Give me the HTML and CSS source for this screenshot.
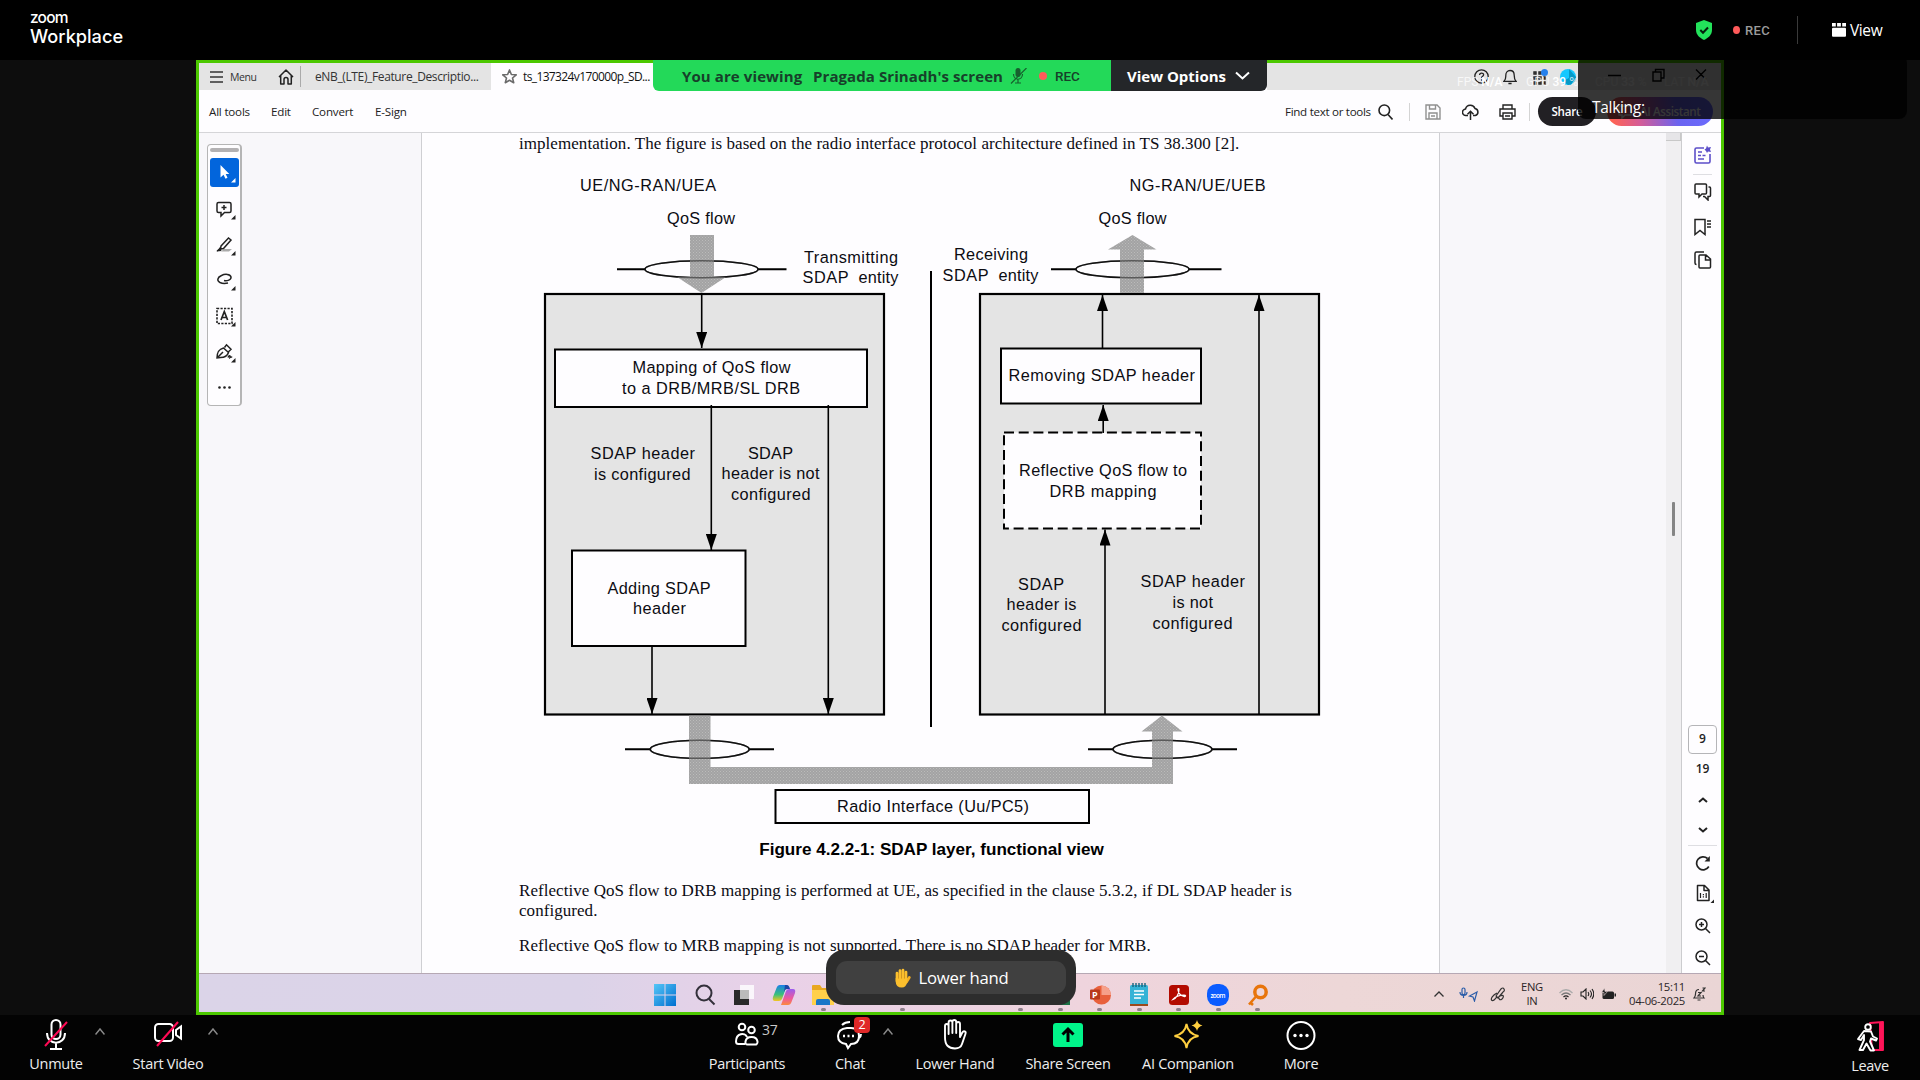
FILE: index.html
```html
<!DOCTYPE html>
<html lang="en">
<head>
<meta charset="utf-8">
<title>Zoom Workplace</title>
<link rel="stylesheet" href="styles.css">
</head>
<body>
<header class="topbar">
  <div class="brand"><span class="brand-zoom">zoom</span><span class="brand-work">Workplace</span></div>
  <div class="top-right">
    <svg class="shield" width="18" height="22" viewBox="0 0 18 22"><path d="M9 1l8 3v7c0 5-4 8-8 10-4-2-8-5-8-10V4z" fill="#23e35b"/><path d="M5.3 11l2.7 2.8 5-5.3" fill="none" stroke="#04200c" stroke-width="2"/></svg>
    <span class="dot"></span><span class="rec">REC</span>
    <span class="top-sep"></span>
    <svg class="view-ico" width="14" height="14" viewBox="0 0 14 14" fill="#fff"><path d="M0 0h3.800v3.600H0zM5.100 0h3.800v3.600H5.100zM10.200 0H14v3.600h-3.800z"/><rect y="4.800" width="14" height="9" rx="1"/></svg>
    <span class="view">View</span>
  </div>
</header>

<main class="stage">
  <section class="share">
    <div class="tabs">
      <div class="tabs-left">
        <svg width="13" height="12" viewBox="0 0 13 12" stroke="#333" stroke-width="1.500"><path d="M0 1h13M0 6h13M0 11h13"/></svg>
        <span class="menu">Menu</span>
        <svg class="home" width="16" height="16" viewBox="0 0 16 16" fill="none" stroke="#222" stroke-width="1.500" stroke-linejoin="round"><path d="M1 8l7-7 7 7M2.700 6.500V15H6v-4.500a2 2 0 014 0V15h3.300V6.500"/></svg>
        <span class="tab-sep"></span>
        <span class="tab-one">eNB_(LTE)_Feature_Descriptio...</span>
      </div>
      <div class="tab-active">
        <svg width="15" height="15" viewBox="0 0 16 16" fill="none" stroke="#6b6b6b" stroke-width="1.700" stroke-linejoin="round"><path d="M8 1l2 4.800 5.200.4-4 3.400 1.300 5L8 12l-4.500 2.600 1.300-5-4-3.400L6 5.800z"/></svg>
        <span>ts_137324v170000p_SD...</span>
      </div>
      <div class="tabs-right">
        <svg width="15" height="15" viewBox="0 0 15 15" fill="none" stroke="#222" stroke-width="1.300"><circle cx="7.500" cy="7.500" r="6.700"/><path d="M5.600 6c0-2.600 4-2.500 4-.2 0 1.500-2 1.500-2 3.200M7.600 10.300v1.500"/></svg>
        <svg class="bell" width="14" height="16" viewBox="0 0 14 16" fill="none" stroke="#222" stroke-width="1.300"><path d="M1 12.300c2-2 1.800-4 1.800-6C2.800 3.500 4.500 1.500 7 1.500s4.200 2 4.200 4.800c0 2 0 4 1.800 6zM5.400 14.500h3.200"/></svg>
        <svg class="apps" width="17" height="16" viewBox="0 0 17 16"><g fill="none" stroke="#222" stroke-width="1.400"><path d="M2 3h2v2H2zM7 3h2v2H7zM2 8h2v2H2zM7 8h2v2H7zM2 13h2v2H2zM7 13h2v2H7zM12 8h1v2h-1zM12 13h1v2h-1z"/></g><circle cx="12.500" cy="3.500" r="3.500" fill="#2680eb"/></svg>
        <svg class="avatar" width="16" height="16" viewBox="0 0 16 16"><circle cx="8" cy="8" r="8" fill="#14c8ff"/><path d="M9 0l7 8a8 8 0 01-8 8l-5-4 6-3z" fill="#0599c6"/></svg>
        <svg class="winctl" width="100" height="14" viewBox="0 0 100 14" fill="none" stroke="#000" stroke-width="1.400"><path d="M1 7.500h13M46 4h8v9h-8zM48.500 4V1.500h8.500V10h-3M89 1.500l10 10M99 1.500l-10 10"/></svg>
        <div class="meter"><span class="m1">FPS <b>N/A</b></span><span class="m2">GPU <b>39</b> %</span><span class="m3">CPU <b>33</b> %</span><span class="m4">LAT <b>N/A</b></span></div>
      </div>
    </div>

    <div class="tools">
      <span class="t-all">All tools</span><span class="t-edit">Edit</span><span class="t-conv">Convert</span><span class="t-sign">E-Sign</span>
      <div class="tools-right">
        <span class="find">Find text or tools</span>
        <svg class="i-search" width="15" height="16" viewBox="0 0 15 16" fill="none" stroke="#222" stroke-width="1.600"><circle cx="6.300" cy="6.300" r="5.300"/><path d="M10 10.500l4.500 5"/></svg>
        <span class="tsep"></span>
        <svg class="i-save" width="16" height="16" viewBox="0 0 16 16" fill="none" stroke="#909090" stroke-width="1.400"><path d="M1 1h11l3 3v11H1zM4.500 1v4h6V1M4 15V9h8v6M6 12h4"/></svg>
        <svg class="i-cloud" width="17" height="16" viewBox="0 0 17 16" fill="none" stroke="#222" stroke-width="1.500"><path d="M6 11.500H4A3.200 3.200 0 013.500 5 5 5 0 0113 4.500a3.600 3.600 0 01.3 7H11M8.500 16V7.500M5.500 10.300l3-3 3 3"/></svg>
        <svg class="i-print" width="17" height="16" viewBox="0 0 17 16" fill="none" stroke="#222" stroke-width="1.400"><path d="M4 5V1h9v4M4 12H1V5h15v7h-3M4 9h9v6H4zM6 12h5"/></svg>
        <span class="tsep tsep2"></span>
        <span class="sharebtn">Share</span>
        <span class="aibtn"><svg width="16" height="14" viewBox="0 0 16 14" fill="none" stroke="#fff" stroke-width="1.500"><path d="M2 1h12v9H8l-3 3v-3H2z"/></svg>AI Assistant</span>
      </div>
    </div>

    <div class="doc">
      <div class="gutter">
        <div class="palette">
          <span class="grip"></span>
          <span class="tool sel"><svg width="29" height="29" viewBox="0 0 29 29" fill="#fff"><path d="M10.500 7v12.500l3-2.700 2 4 2-1-1.800-3.800h3.600zM25.500 20v4.500H21z"/></svg></span>
          <span class="tool"><svg width="29" height="29" viewBox="0 0 29 29"><g fill="none" stroke="#222" stroke-width="1.500"><path d="M8.500 7.500h11q1.500 0 1.500 1.500v7q0 1.500-1.500 1.500h-5L11 21v-3.500H8.500Q7 17.500 7 16V9q0-1.500 1.500-1.500zM14 10v5M11.500 12.500h5"/></g><path d="M25.500 20v4.500H21z" fill="#222"/></svg></span>
          <span class="tool"><svg width="29" height="29" viewBox="0 0 29 29"><path d="M14 18h8l-3 2.500h-8z" fill="#aaa"/><path d="M11 15l7.500-8 2.500 2-7.500 8.500-3 .5zM10 18l-3 2" fill="none" stroke="#222" stroke-width="1.500"/><path d="M10 16l-3.500 4.500 5-.5zM25.500 20v4.500H21z" fill="#222"/></svg></span>
          <span class="tool"><svg width="29" height="29" viewBox="0 0 29 29"><path d="M14 14.500c3 .8 7.500-.7 7-3.500-.6-3-6-3.300-9.500-1.500-4.500 2-4.700 5.300-1.500 7 2 1 5 1.200 8 .5" fill="none" stroke="#222" stroke-width="1.500"/><path d="M25.500 20v4.500H21z" fill="#222"/></svg></span>
          <span class="tool"><svg width="29" height="29" viewBox="0 0 29 29"><path d="M7 6.500h15v15H7z" fill="none" stroke="#222" stroke-width="1.600" stroke-dasharray="2.200 1.300"/><path d="M11 18l3.300-8.500L17.600 18M12 15.500h4.600" fill="none" stroke="#222" stroke-width="1.700"/><path d="M25.500 20v4.500H21z" fill="#222"/></svg></span>
          <span class="tool"><svg width="29" height="29" viewBox="0 0 29 29"><path d="M7 20c0-5 1-8.500 6.500-10l5 4.500c-1 3-3.500 5-8 5zM14.500 9.500l2-2.700 4.500 4.500-2.500 2.500M8 19l5-5M18 19.500c1-2.500 2.500-2.500 2 0 1-.8 1.500-.8 2 0" fill="none" stroke="#222" stroke-width="1.500"/><path d="M25.500 20v4.500H21z" fill="#222"/></svg></span>
          <span class="tool"><svg width="29" height="29" viewBox="0 0 29 29" fill="#222"><circle cx="9.500" cy="13.500" r="1.300"/><circle cx="14.500" cy="13.500" r="1.300"/><circle cx="19.500" cy="13.500" r="1.300"/></svg></span>
        </div>
      </div>
      <article class="page">
        <p class="para p-top">implementation. The figure is based on the radio interface protocol architecture defined in TS 38.300 [2].</p>
        <svg class="figure" width="1017" height="676" viewBox="422 158 1017 676">
          <defs>
            <pattern id="mesh" width="3" height="3" patternUnits="userSpaceOnUse"><rect width="3" height="3" fill="#9c9c9c"/><path d="M0 0h1v1H0zM1.500 1.500h1v1h-1z" fill="#b6b6b6"/></pattern>
            <marker id="head" markerUnits="userSpaceOnUse" markerWidth="16" markerHeight="11" refX="16" refY="5.500" orient="auto"><path d="M0 0l16 5.500L0 11z"/></marker>
          </defs>
          <g class="block"><rect x="545" y="294" width="339" height="420.500"/><rect x="980" y="294" width="339" height="420.500"/></g>
          <g class="box"><rect x="555" y="349.500" width="312" height="57.500"/><rect x="572" y="550.500" width="173.500" height="95.500"/><rect x="1001" y="348.500" width="200" height="55"/><rect x="775.500" y="790" width="313.500" height="33"/></g>
          <rect class="dashed" x="1004" y="432.500" width="197" height="96"/>
          <path class="line" d="M931 271V727M617 269.300h28M758 269.300h28.500M1051 269.300h25M1189 269.300h32.500M625 749.300h25M749 749.300h25M1088 749.300h25M1212 749.300h25"/>
          <g class="oval"><ellipse cx="701.500" cy="269.300" rx="56.500" ry="8.500"/><ellipse cx="1132.500" cy="269.300" rx="56.500" ry="8.500"/><ellipse cx="699.700" cy="749.300" rx="49.500" ry="9"/><ellipse cx="1162.500" cy="749.300" rx="49.500" ry="9"/></g>
          <g fill="url(#mesh)" opacity=".93">
            <path d="M690 235h24v42h12l-24.500 16L677 277h13zM1132.500 235l24 14.500H1144V293h-24v-43.500h-12zM689 715.500h21.500V767h441.500v-35.500h-10.500l20.500-16 20.500 16H1173V784H689z"/>
          </g>
          <g class="oval-over"><ellipse cx="701.500" cy="269.300" rx="56.500" ry="8.500"/><ellipse cx="1132.500" cy="269.300" rx="56.500" ry="8.500"/><ellipse cx="699.700" cy="749.300" rx="49.500" ry="9"/><ellipse cx="1162.500" cy="749.300" rx="49.500" ry="9"/></g>
          <g class="arrow"><path d="M701.700 294v54"/><path d="M711.300 405v145"/><path d="M828.300 405v309"/><path d="M652 646v68"/><path d="M1102.500 348v-53"/><path d="M1103.200 433v-28"/><path d="M1105 714V529.500"/><path d="M1259 714V295"/></g>
          <g class="lbl">
            <text x="580" y="191" textLength="136">UE/NG-RAN/UEA</text><text x="667" y="223.700" textLength="68">QoS flow</text>
            <text x="804" y="262.700" textLength="94">Transmitting</text><text x="802.500" y="282.700" textLength="46">SDAP</text><text x="858.500" y="282.700" textLength="40">entity</text>
            <text x="954" y="260.200" textLength="74">Receiving</text><text x="942.500" y="280.500" textLength="46">SDAP</text><text x="998.500" y="280.500" textLength="40">entity</text>
            <text x="1129.500" y="191" textLength="136">NG-RAN/UE/UEB</text><text x="1098.500" y="223.700" textLength="68">QoS flow</text>
            <text x="632.500" y="373.300" textLength="158">Mapping of QoS flow</text><text x="622" y="394.300" textLength="178">to a DRB/MRB/SL DRB</text>
            <text x="1008.500" y="381.300" textLength="186.500">Removing SDAP header</text>
            <text x="590.500" y="459.300" textLength="104.500">SDAP header</text><text x="594" y="480" textLength="96.500">is configured</text>
            <text x="748" y="459" textLength="45">SDAP</text><text x="721.500" y="479.300" textLength="98">header is not</text><text x="731" y="499.500" textLength="79.500">configured</text>
            <text x="607.500" y="593.800" textLength="103">Adding SDAP</text><text x="633" y="614.300" textLength="53">header</text>
            <text x="1019" y="476" textLength="168">Reflective QoS flow to</text><text x="1049.500" y="496.500" textLength="107">DRB mapping</text>
            <text x="1018" y="589.700" textLength="46">SDAP</text><text x="1006.500" y="610" textLength="70">header is</text><text x="1001.500" y="630.700" textLength="80">configured</text>
            <text x="1140.500" y="587.300" textLength="104.500">SDAP header</text><text x="1172.500" y="608" textLength="40.500">is not</text><text x="1152.500" y="628.500" textLength="80">configured</text>
            <text x="837" y="812.200" textLength="192">Radio Interface (Uu/PC5)</text>
          </g>
        </svg>
        <p class="caption">Figure 4.2.2-1: SDAP layer, functional view</p>
        <p class="para p-drb">Reflective QoS flow to DRB mapping is performed at UE, as specified in the clause 5.3.2, if DL SDAP header is<br>configured.</p>
        <p class="para p-mrb">Reflective QoS flow to MRB mapping is not supported. There is no SDAP header for MRB.</p>
      </article>
      <div class="margin-right"></div>
      <div class="scroll"><span class="scroll-btn"></span><span class="thumb"></span></div>
      <aside class="side">
        <svg class="s-ai" width="18" height="20" viewBox="0 0 18 20" fill="none" stroke="#5c4ec9" stroke-width="1.600"><path d="M10 3H2.500Q1 3 1 4.500v12Q1 18 2.500 18h12q1.500 0 1.500-1.500V9M4 7h4M4 10.500h3M4 14h6M8.500 10.500h3"/><path d="M13 .5l1 2 3-.5-1 2.500 1 2.500-3-.5-1 1.500-1-2-1.500-1.500L12 3.500z" fill="#5c4ec9" stroke="none"/></svg>
        <span class="s-line"></span>
        <svg class="s-com" width="18" height="18" viewBox="0 0 18 18" fill="none" stroke="#222" stroke-width="1.500"><path d="M2 1h9.500q1 0 1 1v8q0 1-1 1H8l-3 3v-3H2q-1 0-1-1V2q0-1 1-1zM14.500 4h1q1 0 1 1v7.500q0 1-1 1H14v3.500l-3.500-3.500H9"/></svg>
        <svg class="s-book" width="18" height="18" viewBox="0 0 18 18" fill="none" stroke="#222" stroke-width="1.500"><path d="M1 1.500h10v15L6 12.500 1 16.500zM13 3h4M13 6h4M13 9h4"/></svg>
        <svg class="s-page" width="18" height="18" viewBox="0 0 18 18" fill="none" stroke="#222" stroke-width="1.500"><path d="M2.500 13.500Q1 13.500 1 12V2.500Q1 1 2.500 1H10M6 4h6l4.500 4v8q0 1-1 1H6q-1 0-1-1V5q0-1 1-1zM11.500 4v5h5"/></svg>
        <span class="s-cur">9</span>
        <span class="s-tot">19</span>
        <svg class="s-up" width="10" height="6" viewBox="0 0 10 6" fill="none" stroke="#222" stroke-width="2"><path d="M1 5l4-3.500L9 5"/></svg>
        <svg class="s-down" width="10" height="6" viewBox="0 0 10 6" fill="none" stroke="#222" stroke-width="2"><path d="M1 1l4 3.500L9 1"/></svg>
        <span class="s-line s-line2"></span>
        <svg class="s-rot" width="16" height="16" viewBox="0 0 16 16" fill="none" stroke="#222" stroke-width="1.700"><path d="M13.800 11.500A6.500 6.500 0 1112.500 3.500"/><path d="M14.800 1v5.500H9.500z" fill="#222" stroke="none"/></svg>
        <svg class="s-fit" width="20" height="20" viewBox="0 0 20 20"><path d="M3.500 1.500h7L15 6v10.500H3.500zM10 1.500V6.500h5" fill="none" stroke="#222" stroke-width="1.500" stroke-linejoin="round"/><path d="M6.500 9v5M12.200 9v5M9.400 10v1.300M9.400 12.300v1.300" stroke="#222" stroke-width="1.200"/><path d="M20 15.500V19h-3.500z" fill="#222"/></svg>
        <svg class="s-zin" width="16" height="16" viewBox="0 0 16 16" fill="none" stroke="#222" stroke-width="1.500"><circle cx="6.500" cy="6.500" r="5.500"/><path d="M10.500 10.500L15 15M4 6.500h5M6.500 4v5"/></svg>
        <svg class="s-zout" width="16" height="16" viewBox="0 0 16 16" fill="none" stroke="#222" stroke-width="1.500"><circle cx="6.500" cy="6.500" r="5.500"/><path d="M10.500 10.500L15 15M4 6.500h5"/></svg>
      </aside>
    </div>

    <div class="taskbar">
      <div class="apps-row">
        <span class="app"><svg width="22" height="22" viewBox="0 0 22 22"><defs><linearGradient id="w" x2="1" y2="1"><stop stop-color="#55c6f7"/><stop offset="1" stop-color="#006fd0"/></linearGradient></defs><path d="M0 0h10.500v10.500H0zM11.500 0H22v10.500H11.500zM0 11.500h10.500V22H0zM11.500 11.500H22V22H11.500z" fill="url(#w)"/></svg></span>
        <span class="app"><svg width="22" height="22" viewBox="0 0 22 22" fill="none" stroke="#33303a" stroke-width="2"><circle cx="10" cy="9" r="7.500"/><path d="M15 15l5.500 5.500"/></svg></span>
        <span class="app"><svg width="22" height="22" viewBox="0 0 22 22"><path d="M1 6h15v15H1z" fill="#2a2a2a"/><path d="M7 1h14v14H7z" fill="#fff" opacity=".8"/><path d="M7 6h9v9H7z" fill="#bbb"/></svg></span>
        <span class="app"><svg width="24" height="22" viewBox="0 0 24 22"><defs><linearGradient id="c1" x2="0" y2="1"><stop stop-color="#1a7fe8"/><stop offset=".6" stop-color="#3bc07a"/><stop offset="1" stop-color="#f5c520"/></linearGradient><linearGradient id="c2" x2="0" y2="1"><stop stop-color="#9a5cf0"/><stop offset=".6" stop-color="#ef5a9a"/><stop offset="1" stop-color="#fb8a3c"/></linearGradient></defs><path d="M8 1h7l-5 14q-1 2-3 2H3q-3 0-2-4L4.500 4Q5.500 1 8 1z" fill="url(#c1)"/><path d="M17 5h4q3 0 2 4l-3.500 9q-1 3-3.500 3H9l5-14q1-2 3-2z" fill="url(#c2)"/><path d="M13 1h2q2 0 3 4h-3q-2 0-3 3z" fill="#1b48a8"/></svg></span>
        <span class="app run"><svg width="24" height="22" viewBox="0 0 24 22"><path d="M1 2q0-1 1-1h7l2 3h12v17H1z" fill="#e9a820"/><path d="M1 6h22v15H1z" fill="#ffd04a"/><path d="M5 21v-4q0-2 2-2h10q2 0 2 2v4z" fill="#1976c8"/></svg></span>
        <span class="app"></span><span class="app run"></span><span class="app"></span><span class="app"></span><span class="app run"></span>
        <span class="app run"><svg width="22" height="22" viewBox="0 0 22 22"><path d="M2 2h19v19H2z" fill="#1d7045"/></svg></span>
        <span class="app run"><svg width="22" height="22" viewBox="0 0 22 22"><circle cx="12.500" cy="11" r="9.500" fill="#e8603c"/><path d="M12.500 1.500A9.500 9.500 0 0122 11h-9.500z" fill="#f6a08a"/><rect x="1" y="5.500" width="10" height="10" rx="1" fill="#b93a1c"/><text x="3" y="14" class="pp">P</text></svg></span>
        <span class="app run"><svg width="20" height="24" viewBox="0 0 20 24"><rect x="1" y="2" width="18" height="20" rx="1.500" fill="#35b3d6"/><path d="M1 21h18v2H1z" fill="#9c4a1c"/><path d="M4 0v4M7 0v4M10 0v4M13 0v4M16 0v4" stroke="#17627c" stroke-width="1.400"/><path d="M5 8h10M5 11.500h10M5 15h7" stroke="#fff" stroke-width="1.300"/></svg></span>
        <span class="app run"><svg width="20" height="20" viewBox="0 0 20 20"><rect width="20" height="20" rx="3.500" fill="#b30b00"/><path d="M4 14.500c3-1 6-5 6-10 0-1.500-1.500-1-1 .5.500 3 3 6 6.500 6.500 1.500 0 1.500-1.300-.5-1.300-4 0-8.500 1.300-11 4.300z" fill="none" stroke="#fff" stroke-width="1.300"/></svg></span>
        <span class="app run"><svg width="22" height="22" viewBox="0 0 22 22"><rect width="22" height="22" rx="9.500" fill="#0b5cff"/><text x="3.500" y="13.500" class="zm" textLength="15">zoom</text></svg></span>
        <span class="app run"><svg width="22" height="22" viewBox="0 0 22 22" fill="none" stroke="#e8750c"><circle cx="13.500" cy="8" r="5.700" stroke-width="3.500"/><path d="M9 12.500L2 20.500M3 18l3 3" stroke-width="2.500"/></svg></span>
      </div>
      <div class="tray">
        <svg class="y-up" width="10" height="6" viewBox="0 0 10 6" fill="none" stroke="#333" stroke-width="1.300"><path d="M.5 5.500L5 1l4.500 4.500"/></svg>
        <svg class="y-mic" width="19" height="15" viewBox="0 0 19 15" fill="none" stroke="#2a5ca8" stroke-width="1.200"><path d="M3 2.500a1.500 1.500 0 013 0V6a1.500 1.500 0 01-3 0zM1 5c0 4.500 7 4.500 7 0M4.500 8.500V11M18 5l-7.500 4 3.500 1 1.500 4z"/></svg>
        <svg class="y-pen" width="16" height="15" viewBox="0 0 16 15" fill="none" stroke="#333" stroke-width="1.200"><path d="M6 9l5-7q2-2 3 0t-1 3L8 11zM7 6C3 8 0 12 2 13.500c3 1 4-5 6-3M10 9c4-2 4 1 2 3-2 1.500-3 .5-3-1"/></svg>
        <span class="lang">ENG<br>IN</span>
        <svg class="y-wifi" width="14" height="11" viewBox="0 0 14 11" fill="none" stroke="#aaa" stroke-width="1.200"><path d="M.5 4Q7-2.500 13.500 4"/><path d="M2.500 6q4.500-4 9 0" stroke="#777"/><path d="M4.500 8Q7 5.800 9.500 8" stroke="#222"/><circle cx="7" cy="9.500" r="1" fill="#222" stroke="none"/></svg>
        <svg class="y-vol" width="14" height="12" viewBox="0 0 14 12" fill="none" stroke="#222" stroke-width="1.100"><path d="M1 4h2l3-3v10L3 8H1zM8 4q1.500 2 0 4M10 2.500q3 3.500 0 7M12 1q3.500 5 0 10"/></svg>
        <svg class="y-bat" width="15" height="12" viewBox="0 0 15 12"><rect x="1.500" y="3.500" width="11.500" height="7.500" rx="1.500" fill="#222"/><path d="M13.500 5.500h1.500v3h-1.500z" fill="#222"/><path d="M3.500 0L.5 4.500h2.500v3l3.500-4H4z" fill="#222" stroke="#ebd6d8" stroke-width=".6"/></svg>
        <span class="clock">15:11<br>04-06-2025</span>
        <svg class="y-bell" width="13" height="14" viewBox="0 0 13 14" fill="none" stroke="#333" stroke-width="1.200"><path d="M6 2.500C3.500 2.500 2.500 4.500 2.500 7c0 2-.5 3-1.500 4h10c-.8-1-1-1.500-1-3M4.500 13h3M5 5.500h3L5 9h3M9.500 1H12L9.500 4H12"/></svg>
      </div>
    </div>
  </section>

  <div class="banner">
    <div class="banner-green"><span class="b-you">You are viewing</span><span class="b-who">Pragada Srinadh's screen</span>
      <svg class="b-mic" width="17" height="16" viewBox="0 0 17 16"><rect x="5.500" y="0" width="5" height="9" rx="2.500" fill="#17602e"/><path d="M3.500 6c0 7 9 7 9 0M8 11v4M5 15h6M16.500 0L1 15.500" fill="none" stroke="#17602e" stroke-width="1.200"/></svg>
      <span class="b-dot"></span><span class="b-rec">REC</span></div>
    <div class="banner-dark"><span class="b-opt">View Options</span><svg width="15" height="9" viewBox="0 0 15 9" fill="none" stroke="#fff" stroke-width="2"><path d="M1 1.500l6.500 6L14 1.500"/></svg></div>
  </div>
  <div class="talking">Talking:</div>
  <div class="handpill"><div class="handbtn">
    <svg width="18" height="20" viewBox="0 0 18 20"><g stroke="#fbbf2d" stroke-width="2.700" stroke-linecap="round"><path d="M4 5v8M7 2.500V12M10 2v10M13 4v8"/><path d="M16.300 9.500L13.500 14" stroke="#f6b020"/></g><path d="M2.700 10h11.700v4q-1.500 5.500-5.500 5.500-6.200 0-6.200-6z" fill="#fbbf2d"/><path d="M5.500 5v6M8.500 4v7M11.500 5v6" stroke="#d9961a" stroke-width=".6"/></svg>
    <span>Lower hand</span></div></div>
</main>

<footer class="bar">
  <div class="item it-unmute">
    <svg width="24" height="31" viewBox="0 0 24 31" fill="none" stroke="#fff" stroke-width="2"><rect x="7.500" y="1" width="9" height="19" rx="4.500"/><path d="M3 14c0 13 18 13 18 0M12 24v5M6 30h12"/><path d="M23 3L1 27" stroke="#ff0a54"/></svg><span>Unmute</span></div>
  <svg class="caret c1" width="10" height="7" viewBox="0 0 10 7"><path d="M.5 6.500L5 1l4.500 5.500"/></svg>
  <div class="item it-video">
    <svg width="28" height="31" viewBox="0 0 28 31" fill="none" stroke="#fff" stroke-width="2"><rect x="1" y="5" width="18" height="17" rx="3.500"/><path d="M22 11l5-3.500v12L22 16z"/><path d="M24 3L3 27" stroke="#ff0a54"/></svg><span>Start Video</span></div>
  <svg class="caret c2" width="10" height="7" viewBox="0 0 10 7"><path d="M.5 6.500L5 1l4.500 5.500"/></svg>
  <div class="item it-part">
    <svg width="24" height="31" viewBox="0 0 24 31" fill="none" stroke="#fff" stroke-width="2"><circle cx="7" cy="8" r="3.300"/><circle cx="16.500" cy="11" r="3.300"/><path d="M10 25H3.500Q1 25 1 22.500C1 14 10 13 12 18M12.500 25.500q-2.500 0-2-3c1-6 11-6 12 0 .5 3-2 3-2 3z"/></svg><span>Participants</span><em class="count">37</em></div>
  <div class="item it-chat">
    <svg width="28" height="31" viewBox="0 0 28 31" fill="none" stroke="#fff" stroke-width="2"><path d="M6 6q3-3 8-3M25 15q0 3-2 4M11 9h4q8 0 8 8t-8 8l-3 4-2-4q-8-1-8-8t9-8z"/><path d="M7 17h2M11.500 17h2M16 17h2" stroke-width="2.400"/></svg><span>Chat</span><em class="badge">2</em></div>
  <svg class="caret c3" width="10" height="7" viewBox="0 0 10 7"><path d="M.5 6.500L5 1l4.500 5.500"/></svg>
  <div class="item it-hand">
    <svg width="26" height="31" viewBox="0 0 26 31" fill="none" stroke="#fff" stroke-width="1.900" stroke-linejoin="round"><path d="M3 18V7q0-2 1.800-2t1.800 2v8V3.500q0-2 1.900-2t1.900 2V14 3q0-2 1.900-2t1.900 2v11V5q0-2 1.900-2T18 5v13l2.300-4.500q1-1.700 2.400-1.100t.8 2.300L20 25q-1.500 4.500-7 4.500-10 0-10-11z"/></svg><span>Lower Hand</span></div>
  <div class="item it-share">
    <svg width="30" height="31" viewBox="0 0 30 31"><rect y="4" width="30" height="24" rx="3" fill="#00f58a"/><path d="M15 23V11M9.500 15.500L15 10l5.500 5.500" fill="none" stroke="#000" stroke-width="3"/></svg><span>Share Screen</span></div>
  <div class="item it-ai">
    <svg width="30" height="31" viewBox="0 0 30 31"><path d="M13.500 5q1.500 10 12 12-10.500 1.500-12 12-1.500-10.500-12-12 10.500-2 12-12z" fill="none" stroke="#ffcf3f" stroke-width="1.900"/><path d="M24 1q1 4.500 5.500 5.500Q25 7.500 24 12q-1-4.500-5.500-5.500Q23 5.500 24 1z" fill="#ffcf3f"/></svg><span>AI Companion</span></div>
  <div class="item it-more">
    <svg width="30" height="31" viewBox="0 0 30 31"><circle cx="15" cy="16.500" r="13.500" fill="none" stroke="#fff" stroke-width="2"/><g fill="#fff"><circle cx="9" cy="16.500" r="1.700"/><circle cx="15" cy="16.500" r="1.700"/><circle cx="21" cy="16.500" r="1.700"/></g></svg><span>More</span></div>
  <div class="item it-leave">
    <svg width="30" height="32" viewBox="0 0 30 32" fill="none" stroke="#fff" stroke-width="1.900" stroke-linejoin="round"><path d="M15 3l13-1v28H17z" stroke="#ff1458"/><path d="M26 2v28" stroke="#ff1458" stroke-width="4"/><circle cx="13" cy="7" r="2.800" fill="#000"/><path d="M9 11l7 .5 2 5 4 2-1 2-5-2-1 3 4 9h-3.500l-4-7L8 30H4.500L9 20v-5l-3 5-3-1z" fill="#000"/></svg><span>Leave</span></div>
</footer>
</body>
</html>
```
FILE: styles.css
```css
* { box-sizing: border-box; }
body { margin: 0; width: 1920px; height: 1080px; background: #000; display: flex; flex-direction: column; overflow: hidden; font-family: "Open Sans", "Noto Sans", sans-serif; white-space: nowrap; }
svg { display: block; flex: none; }
p { margin: 0; }

/* Meeting header */
.topbar { height: 60px; display: flex; justify-content: space-between; color: #fff; }
.brand { display: flex; flex-direction: column; padding: 9px 0 0 30px; font-family: Inter, sans-serif; }
.brand-zoom { font-size: 15.500px; line-height: 17px; letter-spacing: -.8px; font-weight: 500; }
.brand-work { font-size: 18.200px; line-height: 21px; font-weight: 500; }
.top-right { display: flex; align-items: center; padding-right: 35px; }
.dot { width: 7px; height: 8px; border-radius: 50%; background: #ff5a5a; margin: 0 5px 0 20px; }
.rec { font: 500 13px Roboto, sans-serif; color: #9b9b9b; width: 27px; letter-spacing: .4px; }
.top-sep { width: 1px; height: 28px; background: #3a3a3a; margin: 0 34px 0 25px; }
.view { font-size: 15.500px; font-weight: 500; width: 35px; margin-left: 4px; letter-spacing: -.4px; }

/* Shared screen */
.stage { height: 955px; position: relative; background: #0d0d0d; padding-left: 196px; }
.share { width: 1528px; height: 955px; border: 3px solid #4cc800; display: flex; flex-direction: column; background: #fefdff; }
.tabs { height: 27px; display: flex; font-size: 12px; color: #333; }
.tabs-left { width: 292px; background: #e4e4e4; display: flex; align-items: center; padding-left: 11px; }
.menu { width: 48px; margin-left: 7px; font-size: 10.500px; letter-spacing: -.4px; }
.tab-sep { width: 1px; height: 21px; background: #aaa; margin: 0 14px 0 6px; }
.tab-one { letter-spacing: -.37px; }
.tab-active { width: 776px; display: flex; align-items: center; padding-left: 11px; gap: 6px; color: #111; letter-spacing: -.62px; }
.tabs-right { flex: 1; background: #e4e4e4; display: flex; align-items: center; padding-left: 207px; position: relative; }
.bell { margin-left: 14px; }
.apps { margin-left: 15px; }
.avatar { margin-left: 11px; }
.winctl { margin: -3px 0 0 31px; }
.meter { position: absolute; left: 190px; top: 11px; display: flex; font: 12px/16px Roboto, sans-serif; color: rgba(255,255,255,.75); }
.m1, .m2, .m3, .m4 { width: 69px; }
.meter b { font-weight: 500; color: #fff; }
.tools { height: 43px; border-bottom: 1px solid #d5d5d8; display: flex; align-items: center; padding: 1px 0 0 10px; font-size: 11.600px; color: #222; letter-spacing: -.2px; }
.t-all { width: 62px; } .t-edit { width: 41px; } .t-conv { width: 63px; }
.tools-right { display: flex; align-items: center; margin-left: auto; padding-right: 8px; }
.find { width: 93px; letter-spacing: -.3px; }
.tsep { width: 1px; height: 18px; background: #d4d4d4; margin: 0 15px 0 16px; }
.i-cloud { margin: 0 20px 0 21px; }
.tsep2 { margin: 0 8px 0 13px; }
.sharebtn { width: 58px; height: 29px; border-radius: 15px; background: #222024; color: #fff; text-align: center; line-height: 29px; font-weight: 600; }
.aibtn { width: 106px; height: 29px; margin-left: 11px; border-radius: 15px; background: linear-gradient(80deg, #ff6353 5%, #d55c97 30%, #6a63f0 65%, #6b6cff); color: #fff; display: flex; align-items: center; padding-left: 10px; gap: 7px; font-weight: 600; letter-spacing: -.4px; }

/* Document */
.doc { height: 840px; display: flex; background: #f8f7fa; }
.gutter { width: 222px; padding: 11px 0 0 8px; }
.palette { width: 35px; height: 262px; border: 1px solid #b5b5b5; border-right-width: 2px; border-radius: 4px; background: #fefdff; padding: 3px 0 0 2px; display: flex; flex-direction: column; }
.grip { width: 29px; height: 4px; border-radius: 2px; background: #b3b1b3; margin-bottom: 6px; flex: none; }
.tool { height: 35.800px; width: 29px; flex: none; }
.sel { height: 29px; border-radius: 3px; background: #0265dc; margin-bottom: 7.800px; }
.page { width: 1019px; border: solid #cfcfd3; border-width: 0 1px; background: #fefdff; height: 840px; overflow: hidden; display: flex; flex-direction: column; }
.para { font: 17px/20px "Liberation Serif", serif; color: #0c0c14; padding-left: 97px; letter-spacing: .05px; }
.p-top { height: 25px; padding-top: 1px; }
.caption { font: bold 17.100px/20px "Liberation Sans", sans-serif; color: #000; text-align: center; height: 31px; padding: 6px 0 0 2px; }
.p-drb { margin-top: 16px; }
.p-mrb { margin-top: 15px; }
.block rect { fill: #e4e4e4; stroke: #000; stroke-width: 2.200; }
.box rect { fill: #fefdff; stroke: #000; stroke-width: 2; }
.dashed { fill: #fefdff; stroke: #000; stroke-width: 2; stroke-dasharray: 10 4.700; }
.line { stroke: #000; stroke-width: 2; fill: none; }
.oval ellipse { fill: #fefdff; stroke: #111; stroke-width: 1.600; }
.oval-over ellipse { fill: none; stroke: #111; stroke-width: 1.600; opacity: .45; }
.arrow path { stroke: #000; stroke-width: 1.600; marker-end: url(#head); }
.lbl { font: 16.300px "Liberation Sans", sans-serif; fill: #0c0c12; }
.margin-right { width: 226px; }
.scroll { width: 15px; background: #f0eff1; display: flex; flex-direction: column; align-items: center; }
.scroll-btn { width: 15px; height: 8px; background: #e6e5e8; border: solid #c8c8c8; border-width: 0 1px 1px 0; }
.thumb { width: 3px; height: 34px; background: #858585; border-radius: 1px; margin-top: 361px; }
.side { flex: 1; border-left: 1px solid #cccccf; background: #fefdff; display: flex; flex-direction: column; align-items: center; color: #222; padding-left: 2px; }
.s-ai { margin-top: 12px; }
.s-line { width: 19px; height: 1px; background: #dedee2; margin: 9px 0 8px; flex: none; }
.s-book { margin-top: 17px; }
.s-page { margin-top: 15px; }
.s-cur { width: 29px; height: 29px; margin-top: 456px; border: 1px solid #b5b5b8; border-radius: 4px; font: 600 12px/26px "Open Sans", sans-serif; text-align: center; }
.s-tot { font: 600 12px/16px "Open Sans", sans-serif; margin-top: 7px; }
.s-up { margin-top: 20px; }
.s-down { margin-top: 24px; }
.s-line2 { width: 29px; margin: 12px 0 9px; }
.s-fit { margin: 13px 0 14px 2px; }
.s-zout { margin-top: 16px; }

/* Windows taskbar */
.taskbar { height: 39px; border-top: 1px solid #b6a8b4; background: linear-gradient(90deg, #dbd4e8 0%, #dbd3e8 25%, #e9d1e8 38%, #efd4dd 58%, #edd7d7 75%, #ead5d5 100%); display: flex; }
.apps-row { display: flex; padding-left: 446.500px; }
.app { width: 39.500px; height: 38px; display: flex; flex-direction: column; align-items: center; justify-content: center; padding-top: 4px; position: relative; }
.run::after { content: ""; position: absolute; bottom: 1px; width: 5px; height: 3px; border-radius: 2px; background: #8d7f8b; }
.pp { font: bold 9px "Open Sans", sans-serif; fill: #fff; }
.zm { font: 600 6.500px "Open Sans", sans-serif; fill: #fff; }
.tray { margin-left: auto; display: flex; align-items: center; padding: 2px 15px 0 0; color: #2b2527; line-height: 14px; }
.y-mic { margin-left: 15px; }
.y-pen { margin-left: 12px; }
.lang { width: 22px; margin: 0 16px 0 15px; text-align: center; letter-spacing: -.3px; font-size: 11.200px; }
.y-vol { margin: 0 7px; }
.clock { width: 69px; text-align: right; letter-spacing: -.3px; font-size: 11.300px; margin-right: 8px; }

/* Overlays on the shared screen */
.banner { position: absolute; left: 653px; top: 0; display: flex; height: 31px; font-weight: 700; font-size: 15px; }
.banner-green { width: 458px; background: #23d959; border-radius: 0 0 0 6px; color: #17402a; display: flex; align-items: center; padding-left: 29px; }
.b-you { width: 131px; letter-spacing: .1px; } .b-who { width: 197px; letter-spacing: .08px; }
.b-dot { width: 8px; height: 8px; border-radius: 50%; background: #ff5a5a; margin: 0 8px 0 12px; }
.b-rec { font: 500 13.500px Roboto, sans-serif; }
.banner-dark { width: 156px; background: #242629; border-radius: 0 0 6px 0; color: #fff; display: flex; align-items: center; padding-left: 16px; }
.b-opt { width: 108px; }
.talking { position: absolute; left: 1578px; top: -5px; width: 329px; height: 64px; border-radius: 8px; background: rgba(0,0,0,.79); color: #fff; font-size: 15.500px; line-height: 20px; padding: 42px 0 0 14px; letter-spacing: -.3px; }
.handpill { position: absolute; left: 826px; top: 890px; width: 250px; height: 55px; padding: 11px 10px; border-radius: 18px; background: #2d2d2d; }
.handbtn { height: 33px; border-radius: 11px; background: #404040; color: #fff; display: flex; align-items: center; justify-content: center; gap: 7px; font-size: 16.700px; letter-spacing: -.2px; }

/* Meeting controls */
.bar { height: 65px; background: #030303; color: #eee; position: relative; display: flex; font-size: 14.500px; letter-spacing: -.3px; }
.item { display: flex; flex-direction: column; align-items: center; gap: 3px; padding-top: 4px; width: 110px; flex: none; position: relative; line-height: 22px; }
.caret { fill: none; stroke: #8a8a8a; stroke-width: 1.500; margin-top: 13px; }
.it-unmute { margin-left: 1px; }
.c1 { margin-left: -16px; }
.it-video { margin-left: 8px; }
.c2 { margin-left: -15px; }
.it-part { margin-left: 474px; }
.it-chat { margin-left: -7px; }
.c3 { margin-left: -22px; }
.it-hand { margin-left: 7px; }
.it-share { margin-left: 3px; }
.it-ai { margin-left: 10px; }
.it-more { margin-left: 3px; }
.it-leave { margin-left: 459px; padding-top: 5px; }
.count { position: absolute; left: 70px; top: 4px; font-style: normal; font-size: 14px; color: #c9c9c9; }
.badge { position: absolute; left: 59px; top: 2px; width: 16px; height: 16px; border-radius: 4px; background: #e02828; color: #fff; font-style: normal; font-size: 12.500px; line-height: 16px; text-align: center; }
```
